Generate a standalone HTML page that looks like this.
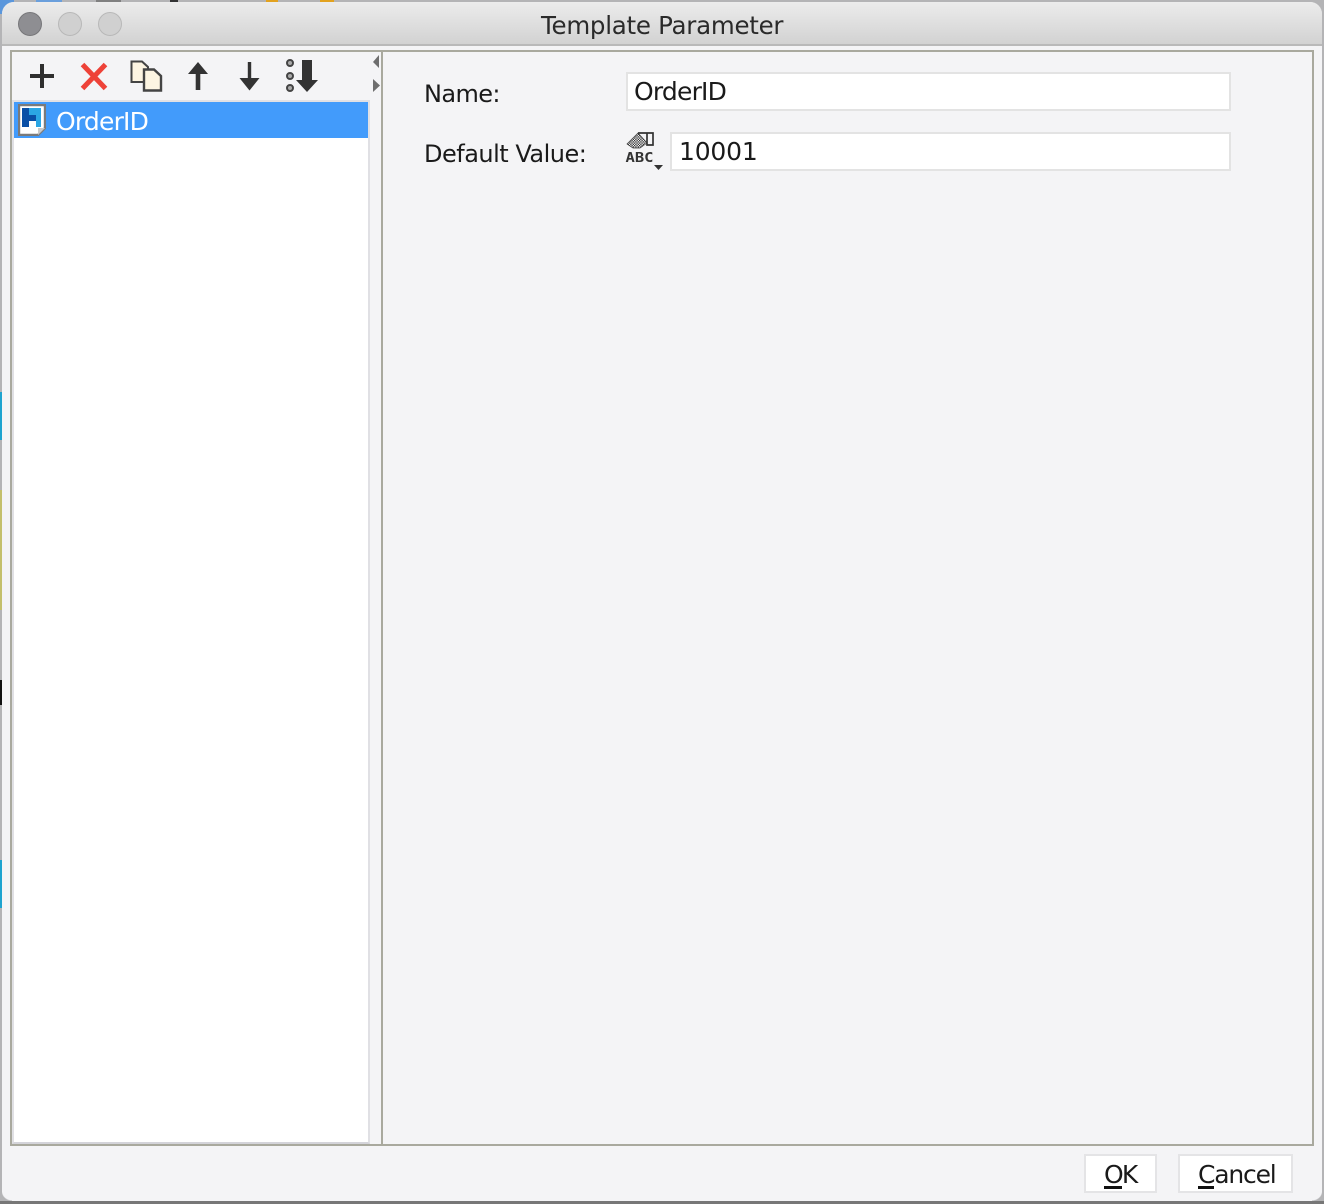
<!DOCTYPE html>
<html><head><meta charset="utf-8"><title>Template Parameter</title>
<style>
html,body{margin:0;padding:0}
body{width:1324px;height:1204px;position:relative;overflow:hidden;background:#b4b4b6;font-family:"DejaVu Sans","Liberation Sans",sans-serif;color:#1a1a1a}
div,span,svg{position:absolute;box-sizing:border-box}
.t{white-space:nowrap;line-height:30px;height:30px}
.field{background:#fff;border:2px solid #e3e3e3}
.btn{background:#fff;border:2px solid #e4e4e6}
u{text-decoration:none;border-bottom:3px solid #111;display:inline-block;line-height:24px;height:23px}
</style></head>
<body>
<!-- background slivers -->
<div style="left:0;top:392px;width:2px;height:48px;background:#1ea3cf"></div>
<div style="left:0;top:490px;width:2px;height:120px;background:#c4c06c"></div>
<div style="left:0;top:680px;width:2px;height:25px;background:#111"></div>
<div style="left:0;top:860px;width:2px;height:48px;background:#1ea3cf"></div>
<div style="left:36px;top:0;width:26px;height:2px;background:#6a9fdc"></div>
<div style="left:96px;top:0;width:25px;height:2px;background:#808080"></div>
<div style="left:170px;top:0;width:8px;height:2px;background:#333"></div>
<div style="left:266px;top:0;width:12px;height:2px;background:#e2a21f"></div>
<div style="left:320px;top:0;width:14px;height:2px;background:#e2a21f"></div>
<div style="left:0;top:0;width:14px;height:14px;background:#5b97dc"></div>

<!-- window -->
<div style="left:2px;top:2px;width:1320px;height:1200px;background:#f4f4f6;border-radius:12px 12px 10px 10px;overflow:hidden">
  <div style="left:0;top:0;width:1320px;height:44px;background:linear-gradient(#ececec,#d2d2d2);border-bottom:2px solid #b9b9b9"></div>
</div>
<div style="left:0;top:1201px;width:1324px;height:3px;background:#777"></div>
<div style="left:0;top:1190px;width:12px;height:11px;background:radial-gradient(circle at 100% 0,transparent 10px,#b4b4b6 11px)"></div>
<div style="left:1312px;top:1190px;width:12px;height:11px;background:radial-gradient(circle at 0 0,transparent 10px,#b4b4b6 11px)"></div>

<!-- traffic lights -->
<div style="left:18px;top:12px;width:24px;height:24px;border-radius:50%;background:#8e8e92;border:1px solid #77777a"></div>
<div style="left:58px;top:12px;width:24px;height:24px;border-radius:50%;background:#d0d0d0;border:1px solid #b8b8b8"></div>
<div style="left:98px;top:12px;width:24px;height:24px;border-radius:50%;background:#d0d0d0;border:1px solid #b8b8b8"></div>
<div class="t" style="left:541px;top:11px;font-size:24.5px;color:#2a2a2a;letter-spacing:-.27px">Template Parameter</div>

<!-- frame -->
<div style="left:10px;top:50px;width:1304px;height:1096px;border:2px solid #a9a99e"></div>
<div style="left:381px;top:52px;width:2px;height:1092px;background:#a9a99e"></div>

<!-- list -->
<div style="left:12px;top:100px;width:358px;height:1044px;background:#fff;border:2px solid #e0e0e4;border-bottom-color:#d4d4da"></div>
<div style="left:14px;top:102px;width:354px;height:36px;background:#429bfb"></div>
<svg style="left:18px;top:104px" width="28" height="32" viewBox="0 0 28 32">
  <path d="M1 1H27V24L20 31H1Z" fill="#fff" stroke="#7a7a7a" stroke-width="2.4"/>
  <rect x="4" y="4" width="19" height="19" fill="#2ba6e4"/>
  <path d="M4 4H11V11H18V17H11V23H4Z" fill="#0a4fa6"/>
  <rect x="11" y="17" width="7" height="7" fill="#fff"/>
  <path d="M20 31V24H27Z" fill="#c9c9c9"/>
</svg>
<div class="t" style="left:56px;top:107px;font-size:25px;color:#fff;letter-spacing:-.8px">OrderID</div>

<!-- toolbar icons -->
<svg style="left:0;top:50px" width="380" height="50" viewBox="0 50 380 50">
  <path d="M30 76H54M42 64V88" stroke="#2f2f2f" stroke-width="4" fill="none"/>
  <path d="M82.500 64.500L105.500 88.500M105.500 64.500L82.500 88.500" stroke="#ee4238" stroke-width="5" fill="none"/>
  <path d="M131.500 61.500H142L148 67V82H131.500Z" fill="#fdf5e2" stroke="#444" stroke-width="2"/>
  <path d="M144 69.500H154L161 76V90.500H144Z" fill="#fdf5e2" stroke="#444" stroke-width="2.400"/>
  <path d="M198 62L208 74H200.300V90H195.700V74H188Z" fill="#333"/>
  <path d="M247.800 62H251.200V78H259.500L249.500 90.500L239.500 78H247.800Z" fill="#333"/>
  <circle cx="290" cy="63" r="3" fill="#aaa" stroke="#444" stroke-width="2"/>
  <circle cx="290" cy="76" r="3" fill="#aaa" stroke="#444" stroke-width="2"/>
  <circle cx="290" cy="88" r="3" fill="#aaa" stroke="#444" stroke-width="2"/>
  <path d="M302 60H312V80H318L307 92L296 80H302Z" fill="#333"/>
  <path d="M379 55V68L373 62Z" fill="#6e6e6e"/>
  <path d="M373 79V92L380 85.500Z" fill="#6e6e6e"/>
</svg>

<!-- form -->
<div class="t" style="left:424px;top:79px;font-size:24px;letter-spacing:-.6px">Name:</div>
<div class="t" style="left:424px;top:139px;font-size:24px;letter-spacing:-.5px">Default Value:</div>
<div class="field" style="left:626px;top:72px;width:605px;height:39px"></div>
<div class="t" style="left:634px;top:77px;font-size:25px;letter-spacing:-.8px">OrderID</div>
<div class="field" style="left:670px;top:132px;width:561px;height:39px"></div>
<div class="t" style="left:679px;top:137px;font-size:25px;letter-spacing:-.2px">10001</div>

<svg style="left:624px;top:130px" width="42" height="42" viewBox="0 0 42 42">
  <defs><pattern id="chk" width="2.500" height="2.500" patternUnits="userSpaceOnUse"><rect width="1.250" height="1.250" fill="#333"/><rect x="1.250" y="1.250" width="1.250" height="1.250" fill="#333"/></pattern></defs>
  <path d="M14 3H29V15H23V3" fill="none" stroke="#333" stroke-width="1.700"/>
  <path d="M3 14L14 3L23 13L16 18H9Z" fill="url(#chk)" stroke="#333" stroke-width=".7"/>
  <path d="M30 35H39L34.500 40Z" fill="#333"/>
  <text x="1.500" y="32" font-family="'DejaVu Sans Mono','Liberation Mono',monospace" font-size="13" font-weight="bold" fill="#333" textLength="28" lengthAdjust="spacingAndGlyphs">ABC</text>
</svg>

<!-- buttons -->
<div class="btn" style="left:1084px;top:1154px;width:73px;height:39px"></div>
<div class="t" style="left:1104px;top:1160px;font-size:25px;letter-spacing:-1.8px"><u>O</u>K</div>
<div class="btn" style="left:1178px;top:1154px;width:115px;height:39px"></div>
<div class="t" style="left:1198px;top:1160px;font-size:25px;letter-spacing:-1.2px"><u>C</u>ancel</div>
</body></html>
